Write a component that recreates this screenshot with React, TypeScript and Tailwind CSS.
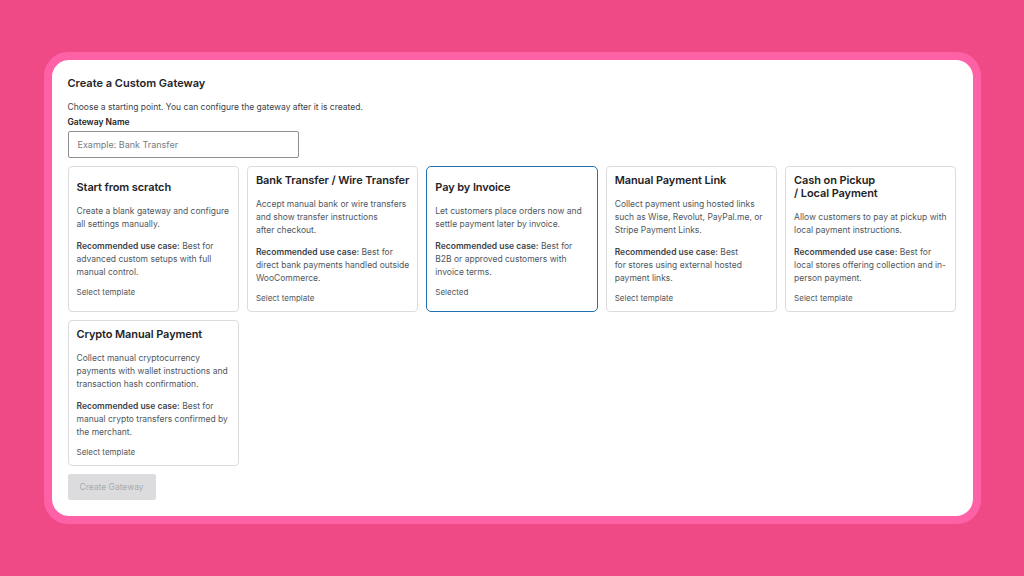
import { ReactNode } from "react";

type Template = {
  title: ReactNode;
  description: ReactNode;
  useCase: ReactNode;
  selected?: boolean;
};

const templates: Template[] = [
  {
    title: "Start from scratch",
    description: "Create a blank gateway and configure all settings manually.",
    useCase: "Best for advanced custom setups with full manual control.",
  },
  {
    title: "Bank Transfer / Wire Transfer",
    description: (
      <>
        Accept manual bank or wire transfers and show transfer instructions
        <br />
        after checkout.
      </>
    ),
    useCase: "Best for direct bank payments handled outside WooCommerce.",
  },
  {
    title: "Pay by Invoice",
    description: "Let customers place orders now and settle payment later by invoice.",
    useCase: "Best for B2B or approved customers with invoice terms.",
    selected: true,
  },
  {
    title: "Manual Payment Link",
    description: "Collect payment using hosted links such as Wise, Revolut, PayPal.me, or Stripe Payment Links.",
    useCase: (
      <>
        Best
        <br />
        for stores using external hosted
        <br />
        payment links.
      </>
    ),
  },
  {
    title: (
      <>
        Cash on Pickup
        <br />/ Local Payment
      </>
    ),
    description: "Allow customers to pay at pickup with local payment instructions.",
    useCase: "Best for local stores offering collection and in-person payment.",
  },
  {
    title: "Crypto Manual Payment",
    description: "Collect manual cryptocurrency payments with wallet instructions and transaction hash confirmation.",
    useCase: "Best for manual crypto transfers confirmed by the merchant.",
  },
];

function TemplateCard({ title, description, useCase, selected }: Template) {
  return (
    <div
      className={`flex flex-col justify-center bg-white px-2 py-[7px] ${
        selected
          ? "rounded-[5px] border-[1.5px] border-[#2271b1]"
          : "rounded-[4px] border border-[#dcdcde]"
      }`}
    >
      <h3 className="whitespace-nowrap text-[11px] font-semibold leading-[13px] tracking-[-0.1px] text-[#1d2327]">
        {title}
      </h3>
      <p className="mt-[11px] text-[8.5px] leading-[13px] text-[#50575e]">{description}</p>
      <p className="mt-[9px] text-[8.5px] leading-[13px] text-[#50575e]">
        <span className="font-semibold text-[#3c434a]">Recommended use case:</span> {useCase}
      </p>
      <p className="mt-[7px] text-[8px] leading-[12px] text-[#50575e]">
        {selected ? "Selected" : "Select template"}
      </p>
    </div>
  );
}

export default function App() {
  return (
    <div
      className="flex h-[576px] w-[1024px] items-center justify-center bg-[#ef4a86]"
      style={{ fontFamily: "Inter, 'Noto Sans', sans-serif" }}
    >
      <div className="rounded-[24px] bg-[#ff61a6] p-2">
        <div className="flex h-[456px] w-[921px] flex-col rounded-[17px] bg-white px-4 pt-[16px]">
          <h2 className="text-[11px] font-semibold leading-[14px] text-[#1d2327]">
            Create a Custom Gateway
          </h2>
          <p className="mt-[11px] text-[8.5px] leading-[12px] text-[#3c434a]">
            Choose a starting point. You can configure the gateway after it is created.
          </p>
          <label className="mt-[3px] text-[8.5px] font-semibold leading-[12px] text-[#1d2327]">
            Gateway Name
          </label>
          <input
            readOnly
            placeholder="Example: Bank Transfer"
            className="mt-[3px] h-[27px] w-[231px] rounded-[2px] border border-[#8c8f94] px-[9px] text-[9px] text-[#1d2327] outline-none placeholder:text-[#787c82]"
          />
          <div className="mt-2 grid grid-cols-5 gap-2">
            {templates.map((t, i) => (
              <TemplateCard key={i} {...t} />
            ))}
          </div>
          <div className="mt-2 flex">
            <button className="h-[26px] w-[88px] rounded-[2px] bg-[#dcdcde] text-[8.5px] text-[#a7aaad]">
              Create Gateway
            </button>
          </div>
        </div>
      </div>
    </div>
  );
}
